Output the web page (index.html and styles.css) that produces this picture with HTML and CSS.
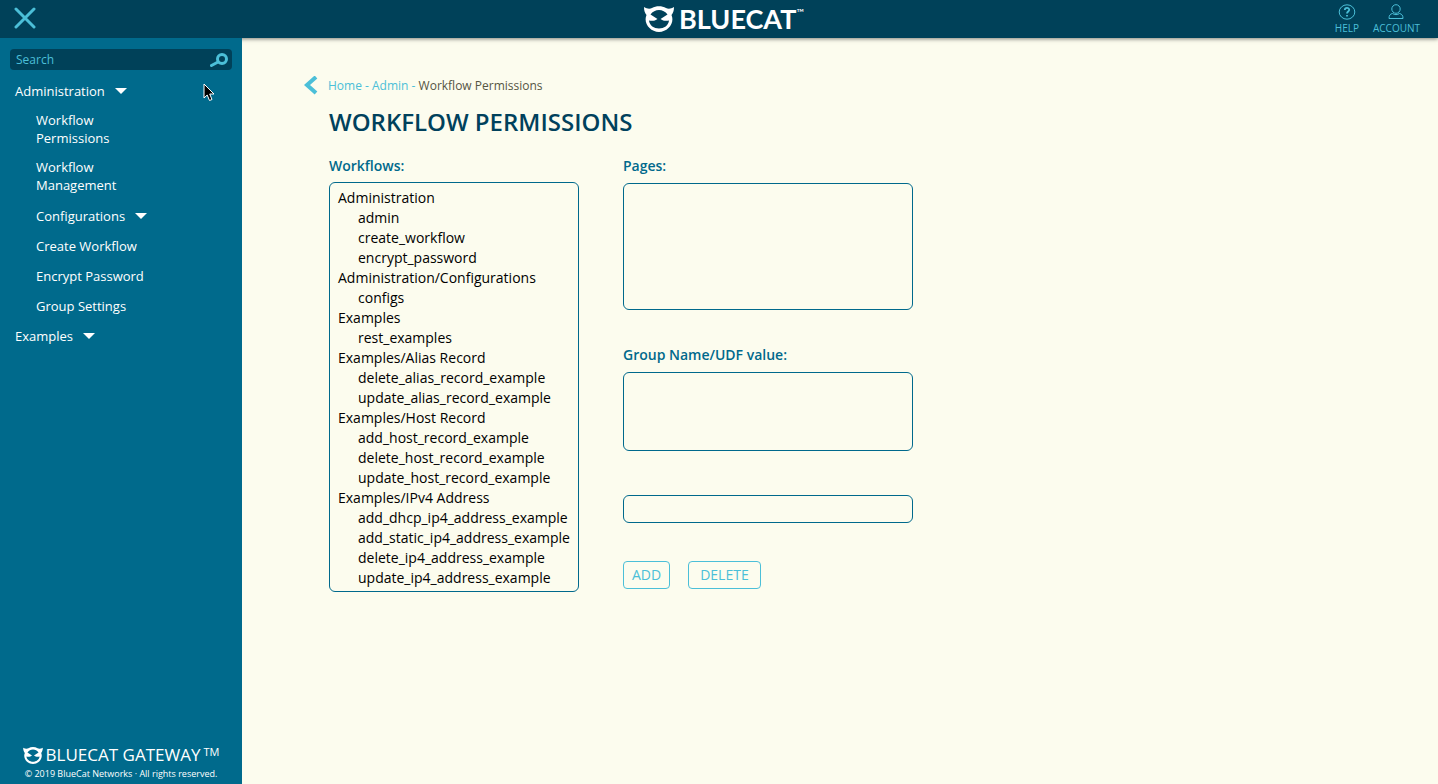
FILE: index.html
```html
<!DOCTYPE html>
<html lang="en">
<head>
<meta charset="utf-8">
<title>Workflow Permissions</title>
<link rel="stylesheet" href="styles.css">
</head>
<body>
<svg class="defs" aria-hidden="true">
  <symbol id="cat" viewBox="0 0 30 26">
    <path fill="currentColor" fill-rule="evenodd" d="M0 1C3 3 6 3 8 2C12-.5 18-.5 22 2C24 3 27 3 30 1C30 5 29 7 27.500 9C31 17 24 26 15 26C6 26-1 17 2.500 9C1 7 0 5 0 1ZM6.500 8.500L13.500 13C11 15 8 15.200 5 14.500C5.500 19.500 10 22.500 15 22.500C20 22.500 24.500 19.500 25 14.500C22 15.200 19 15 16.500 13L23.500 8.500C19.500 2.500 10.500 2.500 6.500 8.500Z"/>
  </symbol>
</svg>
<header class="topbar">
  <button class="icon-button close" type="button" aria-label="Close menu">
    <svg width="22" height="22" viewBox="0 0 22 22"><path d="M2 2L20 20M20 2L2 20"/></svg>
  </button>
  <a class="brand" href="#">
    <svg width="30" height="26"><use href="#cat"/></svg>
    <span class="brand-name">BLUECAT</span><span class="brand-mark">™</span>
  </a>
  <nav class="tools" aria-label="User">
    <a href="#">
      <svg width="18" height="16" viewBox="0 0 18 16"><ellipse cx="9" cy="8" rx="7.800" ry="7.200"/><path stroke-width="1.800" d="M6.800 6C6.800 3.200 11.300 3.300 11.200 5.800C11.200 7.500 9 7.600 9 9.500M9 11V12.600"/></svg>
      HELP
    </a>
    <a href="#">
      <svg width="18" height="16" viewBox="0 0 18 16"><ellipse cx="9" cy="5" rx="4.200" ry="4.300"/><path d="M5.500 9.500C3 10 2 11.500 2 14.500H16C16 11.500 15 10 12.500 9.500C10.500 11 7.500 11 5.500 9.500Z"/></svg>
      ACCOUNT
    </a>
  </nav>
</header>
<div class="layout">
  <aside class="sidebar">
    <form class="search" role="search">
      <input type="search" placeholder="Search" aria-label="Search">
      <button class="icon-button" type="button" aria-label="Run search">
        <svg width="18" height="14" viewBox="0 0 18 14"><circle cx="12" cy="6" r="4.500"/><path d="M8 9L1.500 12.500"/></svg>
      </button>
    </form>
    <nav class="menu" aria-label="Main">
      <ul>
        <li><a href="#">Administration <i class="caret"></i></a>
          <ul>
            <li class="two-line"><a href="#">Workflow<br>Permissions</a></li>
            <li class="two-line"><a href="#">Workflow<br>Management</a></li>
            <li><a href="#">Configurations <i class="caret"></i></a></li>
            <li><a href="#">Create Workflow</a></li>
            <li><a href="#">Encrypt Password</a></li>
            <li><a href="#">Group Settings</a></li>
          </ul>
        </li>
        <li><a href="#">Examples <i class="caret"></i></a></li>
      </ul>
    </nav>
    <footer class="legal">
      <div class="product"><svg width="20" height="17"><use href="#cat"/></svg><span>BLUECAT GATEWAY</span><span class="tm">TM</span></div>
      <small>© 2019 BlueCat Networks · All rights reserved.</small>
    </footer>
  </aside>
  <main class="content">
    <nav class="crumbs" aria-label="Breadcrumb">
      <a class="back" href="#" aria-label="Back"><svg width="14" height="20" viewBox="0 0 14 20"><path d="M12 1L3 9L12 17"/></svg></a>
      <span><a href="#">Home</a> - <a href="#">Admin</a> - <b>Workflow Permissions</b></span>
    </nav>
    <h1>WORKFLOW PERMISSIONS</h1>
    <form class="permissions">
      <div class="field workflows">
        <label for="workflows">Workflows:</label>
        <select id="workflows" multiple size="20">
          <optgroup label="Administration">
            <option>admin</option>
            <option>create_workflow</option>
            <option>encrypt_password</option>
          </optgroup>
          <optgroup label="Administration/Configurations">
            <option>configs</option>
          </optgroup>
          <optgroup label="Examples">
            <option>rest_examples</option>
          </optgroup>
          <optgroup label="Examples/Alias Record">
            <option>delete_alias_record_example</option>
            <option>update_alias_record_example</option>
          </optgroup>
          <optgroup label="Examples/Host Record">
            <option>add_host_record_example</option>
            <option>delete_host_record_example</option>
            <option>update_host_record_example</option>
          </optgroup>
          <optgroup label="Examples/IPv4 Address">
            <option>add_dhcp_ip4_address_example</option>
            <option>add_static_ip4_address_example</option>
            <option>delete_ip4_address_example</option>
            <option>update_ip4_address_example</option>
          </optgroup>
        </select>
      </div>
      <div class="column">
        <div class="field">
          <label for="pages">Pages:</label>
          <select id="pages" class="pages" multiple></select>
        </div>
        <div class="field">
          <label for="groups">Group Name/UDF value:</label>
          <select id="groups" class="groups" multiple></select>
        </div>
        <input class="value" type="text" aria-label="New group name or UDF value">
        <div class="actions">
          <button type="button">ADD</button>
          <button class="delete" type="button">DELETE</button>
        </div>
      </div>
    </form>
  </main>
</div>
<svg class="pointer" width="12" height="19" viewBox="0 0 12 19" aria-hidden="true"><path d="M1 1V15L4.200 12L6.500 17.500L9 16.500L6.700 11H11Z"/></svg>
</body>
</html>
```

FILE: styles.css
```css
* { box-sizing: border-box; }
body {
  margin: 0;
  min-height: 100vh;
  display: flex;
  flex-direction: column;
  background: #fcfcee;
  font-family: "Open Sans", "Noto Sans", sans-serif;
  font-size: 14px;
}
a { color: inherit; text-decoration: none; }
ul { list-style: none; margin: 0; padding: 0; }
svg { display: block; fill: none; stroke: currentColor; }
.defs { position: absolute; width: 0; height: 0; }
.defs symbol { stroke: none; }
.icon-button { padding: 0; border: 0; background: none; color: #4bbfd8; }

.topbar {
  display: grid;
  grid-template-columns: 1fr auto 1fr;
  align-items: center;
  height: 38px;
  padding: 0 18px 0 14px;
  background: #004159;
  color: #4bbfd8;
  box-shadow: 0 1px 4px rgba(0, 0, 0, .5);
}
.close { justify-self: start; padding-bottom: 3px; }
.close svg { stroke-width: 3; stroke-linecap: round; }
.brand { display: flex; align-items: center; padding-left: 14px; color: #fff; font-family: Lato, sans-serif; }
.brand svg { stroke: none; }
.brand-name { margin-left: 5px; font-size: 27px; line-height: 38px; font-weight: 700; }
.brand-mark { align-self: flex-start; margin-top: 6px; font-size: 10px; line-height: 12px; }
.tools { display: flex; justify-self: end; gap: 14px; font-size: 10px; line-height: 14px; }
.tools a { display: flex; flex-direction: column; align-items: center; gap: 1px; }

.layout { flex: 1; display: flex; }
.sidebar {
  position: relative;
  display: flex;
  flex-direction: column;
  flex: 0 0 242px;
  padding: 11px 10px 3px;
  background: #006a8c;
  color: #fff;
}
.search {
  display: flex;
  align-items: center;
  height: 21px;
  padding: 0 4px 0 6px;
  border-radius: 4px;
  background: #004159;
}
.search input {
  flex: 1;
  min-width: 0;
  padding: 0;
  border: 0;
  outline: 0;
  background: none;
  color: #4bbfd8;
  font: 12px/18px "Open Sans", sans-serif;
}
.search input::placeholder { color: #4bbfd8; }
.search svg { stroke-width: 3; stroke-linecap: round; }
.menu { padding: 6px 5px; font-size: 13px; line-height: 18px; font-weight: 500; }
.menu a { display: flex; align-items: center; gap: 10px; padding: 6px 0; }
.menu ul ul { padding-left: 21px; }
.menu .two-line a { padding: 5px 0 6px; }
.menu .two-line + li:not(.two-line) { padding-top: 1px; }
.caret { border: 6px solid transparent; border-top-color: #fff; border-bottom: 0; }
.legal { margin-top: auto; text-align: center; }
.product { display: flex; justify-content: center; gap: 3px; margin-bottom: 2px; font-size: 17px; line-height: 20px; }
.product svg { stroke: none; align-self: center; }
.tm { align-self: flex-start; font-size: 11px; line-height: 14px; }
.legal small { display: block; font-size: 9px; line-height: 14px; white-space: nowrap; }

.content { flex: 1; padding: 38px 62px; color: #00698c; }
.crumbs { display: flex; align-items: center; gap: 10px; color: #4bbfd8; font-size: 12px; line-height: 20px; }
.crumbs b { color: #555544; font-weight: 400; }
.back svg { stroke-width: 4; }
h1 { margin: 9px 25px 17px; color: #00415c; font-size: 24px; line-height: 34px; font-weight: 600; }
.permissions { display: flex; align-items: flex-start; gap: 44px; margin-left: 25px; }
.field { display: flex; flex-direction: column; gap: 6px; }
.field label { font-weight: 600; line-height: 20px; }
.workflows { width: 250px; }
.column { display: flex; flex-direction: column; width: 290px; }
.column .field { gap: 7px; margin-bottom: 35px; }
select, .value {
  width: 100%;
  margin: 0;
  border: 1px solid #00698c;
  border-radius: 6px;
  outline: 0;
  background: none;
  color: #000;
  font: 14px "Open Sans", sans-serif;
}
select { overflow: hidden; }
.workflows select { height: 410px; padding: 5px 6px; }
optgroup { font-weight: 400; }
optgroup option { padding-left: 22px; }
.pages { height: 127px; }
.groups { height: 79px; }
.value { height: 28px; margin-top: 9px; padding: 0 8px; }
.actions { display: flex; gap: 18px; margin-top: 38px; }
.actions button {
  height: 28px;
  padding: 0 8px 2px;
  border: 1px solid #4bbfd8;
  border-radius: 4px;
  background: none;
  color: #4bbfd8;
  font: 14px "Open Sans", sans-serif;
}
.actions .delete { padding: 0 11px 2px; }
.pointer { position: absolute; left: 203px; top: 83px; fill: #000; stroke: #fff; }
```
